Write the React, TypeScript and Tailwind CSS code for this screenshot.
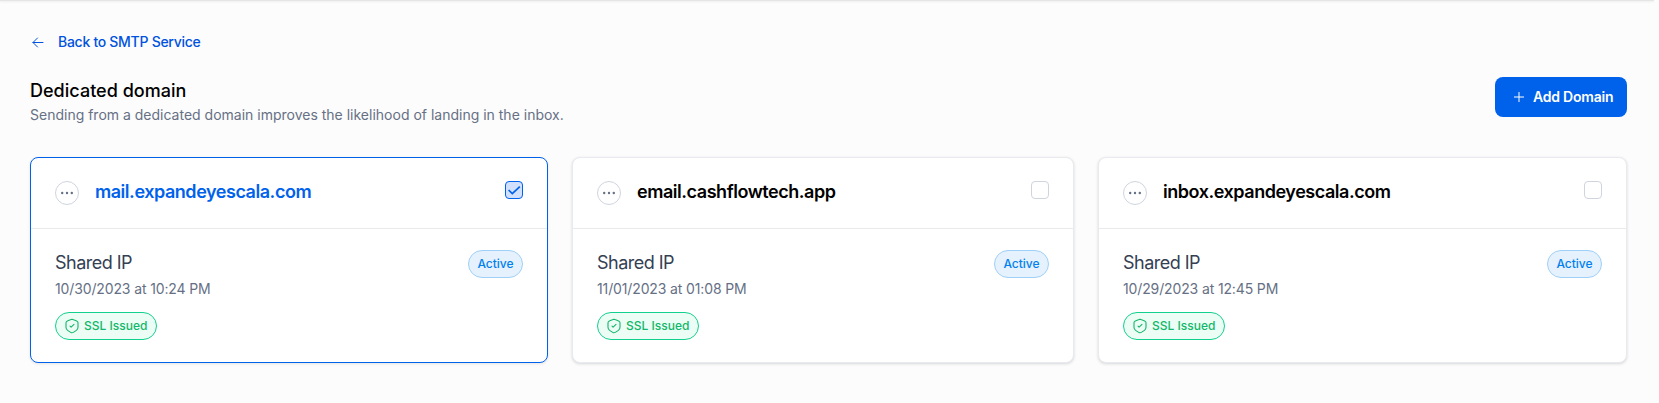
type Domain = {
  name: string;
  ip: string;
  date: string;
  selected: boolean;
};

const domains: Domain[] = [
  { name: "mail.expandeyescala.com", ip: "Shared IP", date: "10/30/2023 at 10:24 PM", selected: true },
  { name: "email.cashflowtech.app", ip: "Shared IP", date: "11/01/2023 at 01:08 PM", selected: false },
  { name: "inbox.expandeyescala.com", ip: "Shared IP", date: "10/29/2023 at 12:45 PM", selected: false },
];

function ArrowLeft() {
  return (
    <svg className="h-3 w-3" viewBox="0 0 12 12" fill="none" stroke="currentColor" strokeWidth="1" strokeLinecap="round" strokeLinejoin="round">
      <path d="M11 6.5H1M5.5 2L1 6.5L5.5 11" />
    </svg>
  );
}

function Plus() {
  return (
    <svg className="h-3 w-3" viewBox="0 0 12 12" fill="none" stroke="currentColor" strokeWidth="1">
      <path d="M6 1V11M1 6H11" />
    </svg>
  );
}

function Dots() {
  return (
    <svg className="h-3.5 w-3.5" viewBox="0 0 14 14" fill="currentColor">
      <circle cx="2.2" cy="7" r="1.2" />
      <circle cx="7" cy="7" r="1.2" />
      <circle cx="11.8" cy="7" r="1.2" />
    </svg>
  );
}

function ShieldCheck() {
  return (
    <svg className="h-4 w-4" viewBox="0 0 16 16" fill="none" stroke="currentColor" strokeWidth="1.1" strokeLinecap="round" strokeLinejoin="round">
      <path d="M7 1.6L3.3 3C2.5 3.3 2 4 2 4.8V9.3C2 10.5 2.6 11.7 3.6 12.4L6.7 14.4C7.5 14.9 8.5 14.9 9.3 14.4L12.4 12.4C13.4 11.7 14 10.5 14 9.3V4.8C14 4 13.5 3.3 12.7 3L9 1.6C8.4 1.3 7.6 1.3 7 1.6Z" />
      <path d="M6 8.1L7.1 9.2L10 6.4" />
    </svg>
  );
}

function Checkbox({ checked }: { checked: boolean }) {
  return (
    <button
      role="checkbox"
      aria-checked={checked}
      className={`flex h-[18px] w-[18px] items-center justify-center rounded-[4px] border ${
        checked ? "border-[#0061eb] bg-[#d1e0fc] text-[#0061eb]" : "border-[#d0d4df] bg-white"
      }`}
    >
      {checked && (
        <svg className="h-4 w-4 shrink-0" viewBox="0 0 16 16" fill="none" stroke="currentColor" strokeWidth="1.7">
          <path d="M2.6 8L6.3 11.6L13.8 4.7" />
        </svg>
      )}
    </button>
  );
}

function DomainCard({ domain }: { domain: Domain }) {
  return (
    <article
      className={`h-[206px] rounded-lg border bg-white ${
        domain.selected
          ? "border-[#0061eb] shadow-[0_1px_3px_rgba(16,24,40,0.1)]"
          : "border-[#e9eaef] shadow-[0_1px_3px_rgba(16,24,40,0.16)]"
      }`}
    >
      <header className="flex h-[71px] items-start justify-between border-b border-[#e9eaec] px-6 pt-[23px]">
        <div className="flex items-center gap-4">
          <button className="flex h-6 w-6 items-center justify-center rounded-full border border-[#cfd4de] text-[#667085]">
            <Dots />
          </button>
          <h2
            className={`-mt-0.5 text-lg leading-6 font-semibold tracking-[-0.46px] ${
              domain.selected ? "text-[#0061eb]" : "text-black"
            }`}
          >
            {domain.name}
          </h2>
        </div>
        <Checkbox checked={domain.selected} />
      </header>
      <div className="flex items-start justify-between px-6 pt-[21px]">
        <div className="pt-px">
          <p className="text-lg leading-6 tracking-[-0.52px] text-[#344054]">{domain.ip}</p>
          <p className="mt-1 text-sm leading-5 tracking-[-0.13px] text-[#667085]">{domain.date}</p>
          <span className="mt-[13px] flex h-7 w-[102px] items-center gap-1 rounded-full border border-[#12d18e] bg-[#ecfdf5] pl-2 text-xs font-medium text-[#12b76a]">
            <ShieldCheck />
            SSL Issued
          </span>
        </div>
        <span className="flex h-7 w-[55px] items-center justify-center rounded-full border border-[#9fd0f8] bg-[#e5f1fd] text-xs font-medium text-[#0080ee]">
          Active
        </span>
      </div>
    </article>
  );
}

export default function App() {
  return (
    <div className="h-[403px] overflow-hidden bg-[#fcfcfc] font-['Inter',sans-serif]">
      <div className="h-px w-[1654px] bg-[#e5e5e5] shadow-[0_1px_2px_rgba(0,0,0,0.08)]" />
      <main className="pt-[31px] pr-8 pl-[30px]">
        <a className="flex h-5 items-center gap-[14px] pl-0.5 text-sm font-[450] tracking-[-0.28px] text-[#0052e0]">
          <ArrowLeft />
          <span>Back to SMTP Service</span>
        </a>
        <div className="mt-[25px] flex items-start justify-between">
          <div className="pt-px">
            <h1 className="text-lg leading-[26px] font-medium tracking-[0.02px] text-black">Dedicated domain</h1>
            <p className="text-sm leading-[22px] text-[#667085]">
              Sending from a dedicated domain improves the likelihood of landing in the inbox.
            </p>
          </div>
          <button className="flex h-10 w-[132px] items-center gap-2 rounded-lg bg-[#0061eb] pl-[18px] text-sm font-semibold tracking-[-0.22px] text-white">
            <Plus />
            Add Domain
          </button>
        </div>
        <section className="mt-[31px] grid grid-cols-[518fr_502fr_529fr] gap-6">
          {domains.map((domain) => (
            <DomainCard key={domain.name} domain={domain} />
          ))}
        </section>
      </main>
    </div>
  );
}
